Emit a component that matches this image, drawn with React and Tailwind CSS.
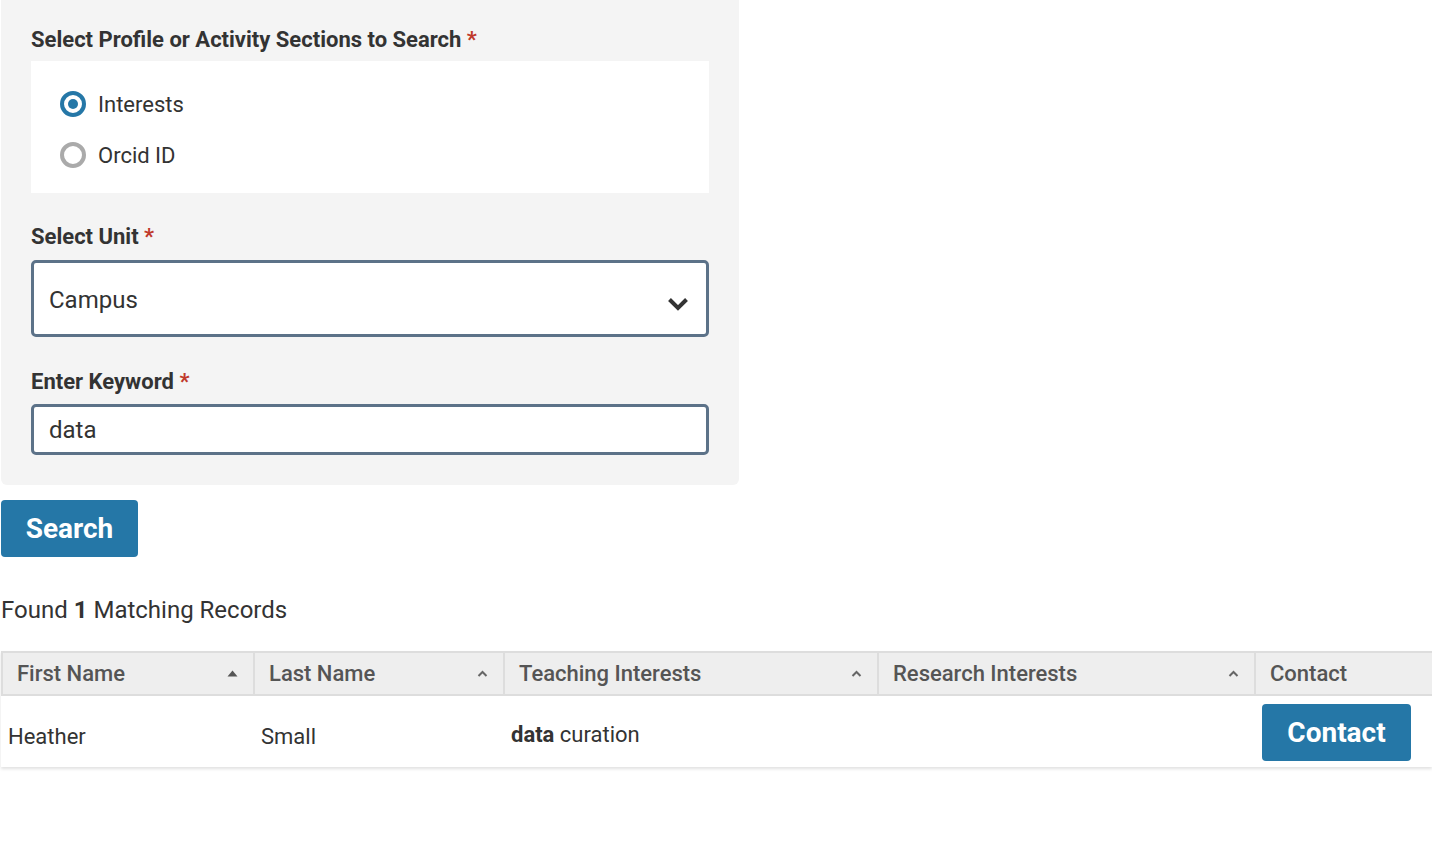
import React from "react";

function SortIcon({ active }) {
    if (active) {
        return (
            <svg width="11" height="7" viewBox="0 0 11 7" className="shrink-0">
                <path d="M5.5 0.5 L10.5 6.5 L0.5 6.5 Z" fill="#555555" />
            </svg>
        );
    }
    return (
        <svg width="11" height="7" viewBox="0 0 11 7" className="shrink-0">
            <path
                d="M1.5 6 L5.5 2 L9.5 6"
                fill="none"
                stroke="#666666"
                strokeWidth="2"
            />
        </svg>
    );
}

function Radio({ checked, label }) {
    return (
        <label className="flex items-center h-[28px] gap-[12px]">
            {checked ? (
                <span className="w-[26px] h-[26px] rounded-full border-[4px] border-[#2577a7] flex items-center justify-center bg-white">
                    <span className="w-[10px] h-[10px] rounded-full bg-[#2577a7]" />
                </span>
            ) : (
                <span className="w-[26px] h-[26px] rounded-full border-[4px] border-[#aaaaaa] bg-white" />
            )}
            <span className="text-[22px] text-[#333333]">{label}</span>
        </label>
    );
}

function FieldLabel({ children }) {
    return (
        <div className="text-[22px] leading-[28px] font-bold text-[#333333]">
            {children} <span className="text-[#c0392b]">*</span>
        </div>
    );
}

const columns = [
    { name: "First Name", width: "w-[252px]", active: true },
    { name: "Last Name", width: "w-[250px]" },
    { name: "Teaching Interests", width: "w-[374px]" },
    { name: "Research Interests", width: "w-[377px]" },
];

export default function App() {
    return (
        <div
            className="min-h-screen bg-white pl-[1px]"
            style={{ fontFamily: "Roboto, 'Liberation Sans', sans-serif" }}
        >
            <div className="w-[738px] bg-[#f4f4f4] rounded-b-[6px] px-[30px] pt-[26px] pb-[30px]">
                <FieldLabel>Select Profile or Activity Sections to Search</FieldLabel>
                <div className="mt-[7px] bg-white pl-[29px] pt-[29px] pb-[24px] flex flex-col gap-[23px]">
                    <Radio checked label="Interests" />
                    <Radio label="Orcid ID" />
                </div>

                <div className="mt-[30px]">
                    <FieldLabel>Select Unit</FieldLabel>
                </div>
                <div className="mt-[9px] h-[77px] bg-white border-[3px] border-[#5c7288] rounded-[5px] flex items-center justify-between pl-[15px] pr-[17px]">
                    <span className="text-[24px] text-[#333333] mt-[2px]">Campus</span>
                    <svg width="22" height="16" viewBox="0 0 22 16" className="mt-[10px]">
                        <path
                            d="M2.5 3.5 L11 12 L19.5 3.5"
                            fill="none"
                            stroke="#333333"
                            strokeWidth="4"
                        />
                    </svg>
                </div>

                <div className="mt-[31px]">
                    <FieldLabel>Enter Keyword</FieldLabel>
                </div>
                <div className="mt-[8px] h-[51px] bg-white border-[3px] border-[#5c7288] rounded-[5px] flex items-center pl-[15px]">
                    <span className="text-[24px] text-[#333333]">data</span>
                </div>
            </div>

            <button className="mt-[15px] w-[137px] h-[57px] bg-[#2577a7] rounded-[4px] text-white text-[28px] font-bold">
                Search
            </button>

            <p className="mt-[38px] text-[24px] leading-[30px] text-[#333333]">
                Found <span className="font-bold">1</span> Matching Records
            </p>

            <div className="mt-[26px] w-[1431px] border-t-[2px] border-[#dddddd] shadow-[0_2px_3px_rgba(0,0,0,0.12)]">
                <div className="flex h-[43px] bg-[#eeeeee] border-b-[2px] border-[#dddddd] border-l-[2px]">
                    {columns.map((col) => (
                        <div
                            key={col.name}
                            className={`${col.width} shrink-0 flex items-center justify-between pl-[14px] pr-[15px] border-r-[2px] border-[#dddddd]`}
                        >
                            <span className="text-[22px] font-medium text-[#555555]">
                                {col.name}
                            </span>
                            <SortIcon active={col.active} />
                        </div>
                    ))}
                    <div className="flex-1 flex items-center pl-[14px]">
                        <span className="text-[22px] font-medium text-[#555555]">
                            Contact
                        </span>
                    </div>
                </div>
                <div className="flex h-[71px] bg-white items-center text-[22px] text-[#333333]">
                    <div className="w-[254px] shrink-0 pl-[7px] pt-[10px]">Heather</div>
                    <div className="w-[250px] shrink-0 pl-[6px] pt-[10px]">Small</div>
                    <div className="w-[374px] shrink-0 pl-[6px] pt-[6px]">
                        <span className="font-bold">data</span> curation
                    </div>
                    <div className="w-[377px] shrink-0" />
                    <div className="flex-1 pl-[6px] pt-[2px]">
                        <button className="w-[149px] h-[57px] bg-[#2577a7] rounded-[4px] text-white text-[28px] font-bold">
                            Contact
                        </button>
                    </div>
                </div>
            </div>
        </div>
    );
}
